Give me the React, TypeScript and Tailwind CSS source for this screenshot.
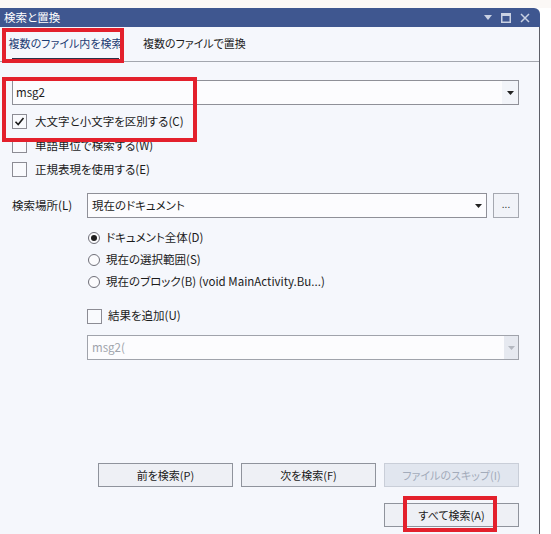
import React from "react";

const font = "[font-family:'Noto_Sans_CJK_JP','Noto_Sans',sans-serif] [font-feature-settings:'palt']";

function Checkbox({ checked }: { checked?: boolean }) {
  return (
    <div className="w-[15px] h-[15px] border border-[#8c8c94] bg-[#f9fafd] flex items-center justify-center shrink-0">
      {checked && (
        <svg width="11" height="11" viewBox="0 0 11 11">
          <path d="M1.5 5.8 L4.2 8.5 L9.5 2" fill="none" stroke="#1b1b1b" strokeWidth="1.6" />
        </svg>
      )}
    </div>
  );
}

function Radio({ checked }: { checked?: boolean }) {
  return (
    <div className="w-[12px] h-[12px] rounded-full border border-[#6f6f78] bg-[#fbfbfd] flex items-center justify-center shrink-0">
      {checked && <div className="w-[6px] h-[6px] rounded-full bg-[#1e1e1e]" />}
    </div>
  );
}

function Arrow({ color = "#222" }: { color?: string }) {
  return (
    <svg width="7" height="4" viewBox="0 0 7 4">
      <path d="M0 0 H7 L3.5 4 Z" fill={color} />
    </svg>
  );
}

function Button({ children, disabled }: { children: React.ReactNode; disabled?: boolean }) {
  return (
    <div
      className={
        "w-[135px] h-[24px] border flex items-center justify-center text-[11px] whitespace-nowrap " +
        (disabled
          ? "bg-[#e1e6ef] border-[#c9ced8] text-[#a3abba]"
          : "bg-[#eef0f5] border-[#8f939c] text-[#1b1b1b]")
      }
    >
      {children}
    </div>
  );
}

export default function App() {
  return (
    <div className={"w-[551px] h-[534px] bg-white flex flex-col overflow-hidden relative " + font}>
      <div className="h-[8px] bg-[#fbf8f6] shrink-0" />
      <div className="w-[540px] flex-1 flex flex-col">
        {/* title bar */}
        <div className="h-[19px] bg-[#3f5790] rounded-tr-[6px] flex items-center pl-[4px] pr-[10px] shrink-0">
          <span className="text-[11.5px] text-white leading-none">検索と置換</span>
          <div className="ml-auto flex items-center gap-[9px]">
            <svg width="8" height="5" viewBox="0 0 8 5">
              <path d="M0 0 H8 L4 5 Z" fill="#c9d1e3" />
            </svg>
            <svg width="10" height="10" viewBox="0 0 10 10">
              <rect x="0.75" y="0.75" width="8.5" height="8.5" fill="none" stroke="#c9d1e3" strokeWidth="1.5" />
              <rect x="0" y="0" width="10" height="3" fill="#c9d1e3" />
            </svg>
            <svg width="10" height="10" viewBox="0 0 10 10">
              <path d="M1 1 L9 9 M9 1 L1 9" stroke="#c9d1e3" strokeWidth="1.5" />
            </svg>
          </div>
        </div>
        {/* body */}
        <div className="flex-1 bg-[#f5f7fc] border-r border-[#5d5f68] flex flex-col text-[#1b1b1b]">
          {/* tabs */}
          <div className="h-[35px] flex items-end border-b border-[#a3a6ae] pl-[12px] shrink-0">
            <div className="h-[34px] w-[107px] flex items-center justify-center border-b-[3px] border-[#29334a] text-[11px] text-[#1c3b73] pt-[2px] whitespace-nowrap">
              複数のファイル内を検索
            </div>
            <div className="h-[34px] ml-[24px] flex items-center text-[11px] text-[#1b1b1b] pb-[1px] whitespace-nowrap">
              複数のファイルで置換
            </div>
          </div>

          <div className="pl-[12px] pr-[20px] pt-[18px] flex flex-col">
            {/* search combo */}
            <div className="h-[25px] border border-[#8f9098] bg-[#fcfcfe] flex items-center pl-[3px]">
              <span className="text-[11.5px]">msg2</span>
              <div className="ml-auto w-[16px] h-full bg-[#f2f4f9] flex items-center justify-center">
                <Arrow />
              </div>
            </div>

            <div className="mt-[9px] flex flex-col gap-[9px] text-[11.5px]">
              <div className="flex items-center gap-[8px] h-[15px]">
                <Checkbox checked />
                <span>大文字と小文字を区別する(C)</span>
              </div>
              <div className="flex items-center gap-[8px] h-[15px]">
                <Checkbox />
                <span>単語単位で検索する(W)</span>
              </div>
              <div className="flex items-center gap-[8px] h-[15px]">
                <Checkbox />
                <span>正規表現を使用する(E)</span>
              </div>
            </div>

            {/* look in */}
            <div className="mt-[16px] flex items-center h-[25px] text-[11.5px]">
              <span className="w-[75px]">検索場所(L)</span>
              <div className="w-[400px] h-[25px] border border-[#8f9098] bg-[#fcfcfe] flex items-center pl-[4px]">
                <span>現在のドキュメント</span>
                <div className="ml-auto w-[16px] h-full flex items-center justify-center">
                  <Arrow />
                </div>
              </div>
              <div className="ml-[6px] w-[26px] h-[25px] border border-[#a5a8b0] bg-[#f1f3f8] flex items-center justify-center text-[10px] text-[#333] leading-none pb-[3px]">
                ...
              </div>
            </div>

            <div className="pl-[76px] mt-[13px] flex flex-col gap-[9px] text-[11.5px]">
              <div className="flex items-center gap-[6px] h-[13px]">
                <Radio checked />
                <span>ドキュメント全体(D)</span>
              </div>
              <div className="flex items-center gap-[6px] h-[13px]">
                <Radio />
                <span>現在の選択範囲(S)</span>
              </div>
              <div className="flex items-center gap-[6px] h-[13px]">
                <Radio />
                <span>現在のブロック(B) (void MainActivity.Bu...)</span>
              </div>
            </div>

            <div className="pl-[75px] mt-[20px] flex items-center gap-[6px] h-[16px] text-[11.5px]">
              <Checkbox />
              <span>結果を追加(U)</span>
            </div>

            <div className="ml-[75px] mt-[11px] h-[25px] border border-[#a0a3ab] bg-[#fcfcfe] flex items-center pl-[4px]">
              <span className="text-[11.5px] text-[#a0a4ac]">msg2(</span>
              <div className="ml-auto w-[14px] h-full bg-[#e6e9f0] flex items-center justify-center">
                <Arrow color="#b4b8c0" />
              </div>
            </div>
          </div>

          <div className="flex-1" />

          <div className="pr-[20px] flex flex-col items-end gap-[16px] pb-[7px]">
            <div className="flex gap-[8px]">
              <Button>前を検索(P)</Button>
              <Button>次を検索(F)</Button>
              <Button disabled>ファイルのスキップ(I)</Button>
            </div>
            <Button>すべて検索(A)</Button>
          </div>
        </div>
      </div>

      {/* red highlight boxes */}
      <div className="absolute left-[2px] top-[28px] w-[122px] h-[35px] border-[4px] border-[#e3202c]" />
      <div className="absolute left-[2px] top-[77px] w-[195px] h-[65px] border-[4px] border-[#e3202c]" />
      <div className="absolute left-[403px] top-[496px] w-[94px] h-[36px] border-[4px] border-[#e3202c]" />
    </div>
  );
}
